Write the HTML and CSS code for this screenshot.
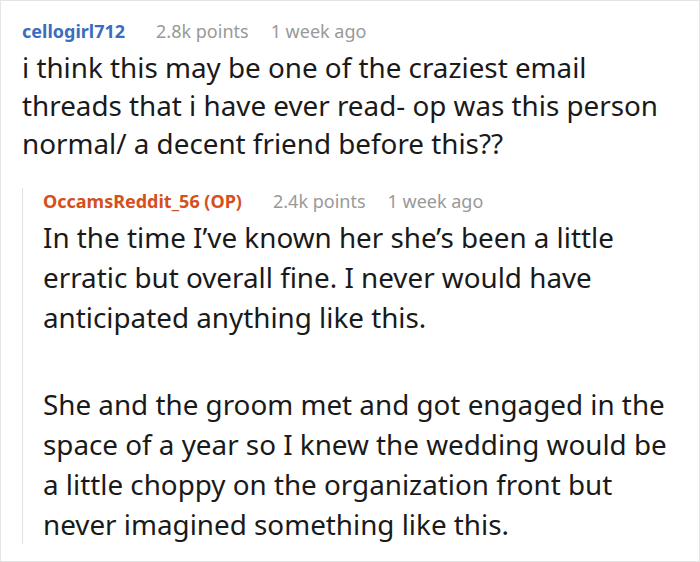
FILE: index.html
```html
<!DOCTYPE html>
<html>
<head>
<meta charset="utf-8">
<link rel="stylesheet" href="styles.css">
</head>
<body>
<div class="frame">
  <div class="comment">
    <div class="meta">
      <span class="author">cellogirl712</span>
      <span class="info">2.8k points</span>
      <span class="info">1 week ago</span>
    </div>
    <div class="body top-body">
      <p>i think this may be one of the craziest email threads that i have ever read- op was this person normal/ a decent friend before this??</p>
    </div>
    <div class="reply">
      <div class="meta reply-meta">
        <span class="author op">OccamsReddit_56 (OP)</span>
        <span class="info">2.4k points</span>
        <span class="info">1 week ago</span>
      </div>
      <div class="body reply-body">
        <p>In the time I’ve known her she’s been a little erratic but overall fine. I never would have anticipated anything like this.</p>
        <p>She and the groom met and got engaged in the space of a year so I knew the wedding would be a little choppy on the organization front but never imagined something like this.</p>
      </div>
    </div>
  </div>
</div>
</body>
</html>
```

FILE: styles.css
```css
html, body {
  margin: 0;
  padding: 0;
  background: #fff;
}
.frame {
  width: 700px;
  height: 562px;
  box-sizing: border-box;
  border: 1px solid #e4e4e4;
  overflow: hidden;
  font-family: "Noto Sans", sans-serif;
  color: #1a1a1a;
}
.comment {
  padding: 17px 0 0 21px;
}
.meta {
  display: flex;
  font-size: 18px;
  line-height: 26px;
}
.author {
  font-weight: bold;
  color: #3b6cbf;
  margin-right: 31px;
}
.author.op {
  color: #d4501c;
}
.info {
  color: #999;
  margin-right: 22px;
}
.body p {
  margin: 0;
}
.top-body {
  font-size: 27.8px;
  line-height: 38px;
  margin-top: 4px;
  padding-right: 10px;
}
.reply {
  margin-top: 38px;
  border-left: 1px solid #e2e2e2;
  padding-left: 20px;
}
.reply-meta {
  margin-top: -12px;
}
.reply-body {
  font-size: 27.8px;
  line-height: 40px;
  margin-top: 3px;
  padding-right: 20px;
}
.reply-body p + p {
  margin-top: 47px;
}
```
